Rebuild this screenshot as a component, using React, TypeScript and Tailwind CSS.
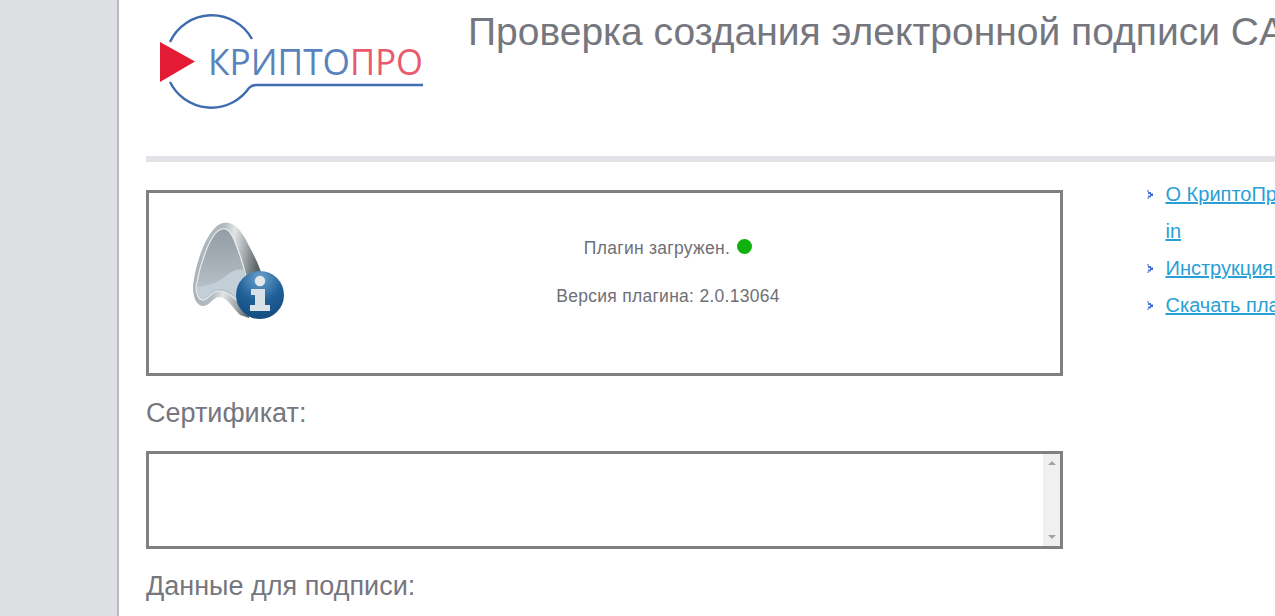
export default function App() {
  return (
    <div className="flex h-[616px] w-[1275px] overflow-hidden bg-white font-['Liberation_Sans',Arial,sans-serif] text-[#75767e]">
      <div className="w-[119px] shrink-0 border-r-2 border-[#b9babd] bg-[#dddfe3]" />
      <div className="min-w-0 flex-1 pl-[27px]">
        <div className="flex h-[156px] items-start">
          <div className="w-[322px] shrink-0 pl-[13px] pt-[13px]">
            <svg width="268" height="98" viewBox="0 0 268 98">
              <path d="M11 29 A46 46 0 0 1 93 26" fill="none" stroke="#3f6cae" strokeWidth="2.4" />
              <path d="M11 69 A46 46 0 0 0 90 75 Q93 72 97 72 L264 72" fill="none" stroke="#3f6cae" strokeWidth="2.4" />
              <polygon points="1,29 36,48.5 1,69" fill="#e31b35" />
              <text x="49" y="62" fontFamily="Open Sans, Liberation Sans, sans-serif" fontSize="37" fill="#5a83bd" textLength="142" lengthAdjust="spacingAndGlyphs">КРИПТО</text>
              <text x="191" y="62" fontFamily="Open Sans, Liberation Sans, sans-serif" fontSize="37" fill="#ea5a6e" textLength="73" lengthAdjust="spacingAndGlyphs">ПРО</text>
            </svg>
          </div>
          <h1 className="mt-[10px] whitespace-nowrap text-[39px] font-normal leading-[44px] text-[#75767e]">
            Проверка создания электронной подписи CAdES-BES
          </h1>
        </div>
        <div className="h-[6px] bg-[#e2e3e7]" />
        <div className="mt-[28px] flex">
          <div className="w-[917px] shrink-0">
            <div className="flex h-[186px] border-[3px] border-[#808080]">
              <div className="w-[139px] shrink-0 pl-[44px] pt-[29px]">
                <svg width="96" height="100" viewBox="0 0 96 100">
                  <defs>
                    <linearGradient id="rim" x1="0" y1="0" x2="1" y2="0.25">
                      <stop offset="0" stopColor="#a3aeb4" />
                      <stop offset="0.45" stopColor="#b4bcc1" />
                      <stop offset="0.6" stopColor="#e2e5e7" />
                      <stop offset="0.8" stopColor="#a0a7ab" />
                      <stop offset="1" stopColor="#5b6266" />
                    </linearGradient>
                    <linearGradient id="face" x1="0" y1="0" x2="0" y2="1">
                      <stop offset="0" stopColor="#939da3" />
                      <stop offset="0.55" stopColor="#aab4ba" />
                      <stop offset="1" stopColor="#c3ced5" />
                    </linearGradient>
                    <radialGradient id="ball" cx="0.5" cy="0.15" r="0.95">
                      <stop offset="0" stopColor="#6ea2cf" />
                      <stop offset="0.5" stopColor="#1f6098" />
                      <stop offset="1" stopColor="#124777" />
                    </radialGradient>
                  </defs>
                  <path d="M30 1 C40 -1 46 6 52 16 C58 28 64 38 68 50 L56 96 L47 93 C40 86 34 75 26 75 C20 75 16 85 9 84 C3 83 0 74 0 66 C1 46 14 4 30 1 Z" fill="url(#rim)" />
                  <path d="M29 7 C35 5 39 12 42 20 C47 32 50 42 53 54 L50 84 C43 78 35 69 26 69 C18 69 15 79 9 78 C5 77 3 70 3 65 C6 46 17 9 29 7 Z" fill="url(#face)" stroke="#e9edf0" strokeWidth="1.2" />
                  <path d="M4 65 C18 63 26 60 34 53 C40 48 47 46 52 49 L50 80 C43 74 35 67 26 67 C18 67 15 76 9 76 C6 75 4 70 4 65 Z" fill="#c3cfd7" />
                  <circle cx="67" cy="73" r="24" fill="url(#ball)" />
                  <circle cx="67" cy="59" r="5.2" fill="#e3e8ec" />
                  <path d="M58 67 H72 V83 H77 V89 H57 V83 H62 V73 H58 Z" fill="#d9e0e6" />
                </svg>
              </div>
              <div className="flex flex-1 flex-col items-center pr-[12px] pt-[45px] text-[17.5px] leading-[20px] tracking-[0.28px] text-[#6e6f76]">
                <div className="flex h-[20px] items-center">
                  <span>Плагин загружен.</span>
                  <span className="ml-[7px] mt-[-4px] h-[15px] w-[15px] rounded-full bg-[#0fb10f]" />
                </div>
                <div className="mt-[28px]">Версия плагина: 2.0.13064</div>
              </div>
            </div>
            <div className="mt-[22px] text-[27px] leading-[30px]">Сертификат:</div>
            <div className="mt-[23px] flex h-[98px] border-[3px] border-[#808080]">
              <div className="flex-1" />
              <div className="flex w-[17px] flex-col items-center justify-between bg-[#f0f0f0] py-[7px]">
                <span className="h-0 w-0 border-x-[4px] border-b-[4px] border-x-transparent border-b-[#a3a3a3]" />
                <span className="h-0 w-0 border-x-[4px] border-t-[4px] border-x-transparent border-t-[#a3a3a3]" />
              </div>
            </div>
            <div className="mt-[22px] text-[27px] leading-[30px]">Данные для подписи:</div>
          </div>
          <ul className="ml-[83px] mt-[-14px] w-[300px] shrink-0 text-[20px] leading-[37px] text-[#2a9fd6]">
            {[
              ["О КриптоПро CSP", "in"],
              ["Инструкция по установке"],
              ["Скачать плагин"],
            ].map((lines) => (
              <li key={lines[0]} className="relative pl-[19.5px]">
                <svg className="absolute left-0 top-[14px]" width="8" height="9" viewBox="0 0 8 9">
                  <rect x="1" y="0" width="2" height="2" fill="#8fb0e8" />
                  <rect x="2" y="2" width="3" height="2" fill="#4a78d8" />
                  <rect x="4" y="3.5" width="3" height="2.5" fill="#3a68d0" />
                  <rect x="2" y="5.5" width="3" height="2" fill="#4a78d8" />
                  <rect x="1" y="7.5" width="2" height="1.5" fill="#8fb0e8" />
                </svg>
                {lines.map((l) => (
                  <a key={l} href="#" className="block whitespace-nowrap underline">{l}</a>
                ))}
              </li>
            ))}
          </ul>
        </div>
      </div>
    </div>
  );
}
